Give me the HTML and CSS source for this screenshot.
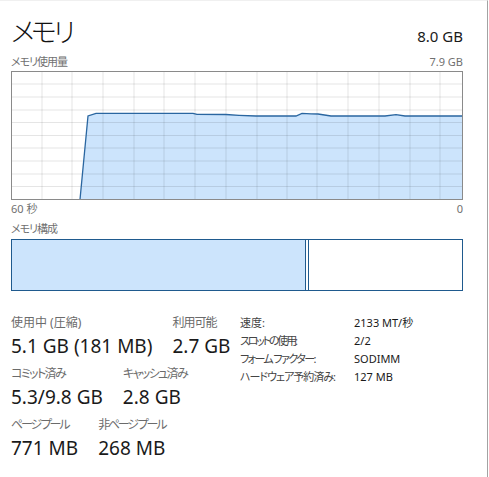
FILE: index.html
```html
<!DOCTYPE html>
<html lang="ja">
<head>
<meta charset="utf-8">
<title>メモリ</title>
<link rel="stylesheet" href="styles.css">
</head>
<body>
<div class="panel">
  <div class="head">
    <h1 class="title">メモリ</h1>
    <div class="total">8.0 GB</div>
  </div>
  <div class="caprow"><span class="t1">メモリ使用量</span><span>7.9 GB</span></div>
  <svg class="graph" width="452" height="129" viewBox="0 0 452 129" xmlns="http://www.w3.org/2000/svg">
    <rect x="0" y="0" width="452" height="129" fill="#ffffff"/>
    <polygon class="area" points="69,128.5 77,45 85,42.3 182,42.3 186,43.3 215,43.5 228,44.3 245,45 285,45 291,42.3 300,42.8 307,43 320,45 374,45 385,43.7 394,45 451.5,45 451.5,128.5"/>
    <g class="grid">
      <line x1="31" y1="0" x2="31" y2="129"/>
      <line x1="61" y1="0" x2="61" y2="129"/>
      <line x1="92" y1="0" x2="92" y2="129"/>
      <line x1="123" y1="0" x2="123" y2="129"/>
      <line x1="153" y1="0" x2="153" y2="129"/>
      <line x1="184" y1="0" x2="184" y2="129"/>
      <line x1="215" y1="0" x2="215" y2="129"/>
      <line x1="246" y1="0" x2="246" y2="129"/>
      <line x1="276" y1="0" x2="276" y2="129"/>
      <line x1="306" y1="0" x2="306" y2="129"/>
      <line x1="337" y1="0" x2="337" y2="129"/>
      <line x1="368" y1="0" x2="368" y2="129"/>
      <line x1="399" y1="0" x2="399" y2="129"/>
      <line x1="429" y1="0" x2="429" y2="129"/>
      <line x1="0" y1="13" x2="452" y2="13"/>
      <line x1="0" y1="26" x2="452" y2="26"/>
      <line x1="0" y1="39" x2="452" y2="39"/>
      <line x1="0" y1="51.5" x2="452" y2="51.5"/>
      <line x1="0" y1="64.5" x2="452" y2="64.5"/>
      <line x1="0" y1="77" x2="452" y2="77"/>
      <line x1="0" y1="90" x2="452" y2="90"/>
      <line x1="0" y1="103" x2="452" y2="103"/>
      <line x1="0" y1="115.5" x2="452" y2="115.5"/>
    </g>
    <polyline class="line" points="69,128.5 77,45 85,42.3 182,42.3 186,43.3 215,43.5 228,44.3 245,45 285,45 291,42.3 300,42.8 307,43 320,45 374,45 385,43.7 394,45 451.5,45"/>
    <rect class="frame" x="0.5" y="0.5" width="451" height="128"/>
  </svg>
  <div class="caprow axis"><span>60 秒</span><span>0</span></div>
  <div class="caption t1">メモリ構成</div>
  <div class="comp">
    <div class="seg used"></div>
    <div class="seg mod"></div>
    <div class="seg rest"></div>
  </div>
  <div class="stats">
    <div class="left">
      <div class="row">
        <div class="stat"><div class="lbl">使用中 (圧縮)</div><div class="val">5.1 GB (181 MB)</div></div>
        <div class="stat"><div class="lbl t1">利用可能</div><div class="val">2.7 GB</div></div>
      </div>
      <div class="row">
        <div class="stat"><div class="lbl t2">コミット済み</div><div class="val">5.3/9.8 GB</div></div>
        <div class="stat"><div class="lbl t2">キャッシュ済み</div><div class="val">2.8 GB</div></div>
      </div>
      <div class="row">
        <div class="stat"><div class="lbl t3">ページ プール</div><div class="val">771 MB</div></div>
        <div class="stat"><div class="lbl t3">非ページ プール</div><div class="val">268 MB</div></div>
      </div>
    </div>
    <div class="right">
      <span class="k">速度:</span><span class="v">2133 MT/秒</span>
      <span class="k t3">スロットの使用:</span><span class="v">2/2</span>
      <span class="k t2">フォーム ファクター:</span><span class="v">SODIMM</span>
      <span class="k t1">ハードウェア予約済み:</span><span class="v">127 MB</span>
    </div>
  </div>
</div>
</body>
</html>
```
FILE: styles.css
```css
html, body {
  margin: 0;
  padding: 0;
  background: #ffffff;
}
body {
  font-family: "Noto Sans", "Noto Sans CJK JP", sans-serif;
  font-feature-settings: "palt";
  color: #1a1a1a;
}
.panel {
  box-sizing: border-box;
  width: 488px;
  height: 477px;
  padding: 12px 24px 0 11px;
  border-right: 1px solid #a3a3a3;
  border-top: 1px solid #f0f0f0;
}
.head {
  display: flex;
  justify-content: space-between;
  align-items: baseline;
}
.title {
  margin: 0;
  font-size: 27px;
  line-height: 37px;
  font-weight: 300;
  letter-spacing: -3.5px;
  color: #111;
}
.total {
  font-size: 15px;
  color: #1a1a1a;
}
.caprow {
  display: flex;
  justify-content: space-between;
  font-size: 11px;
  line-height: 14px;
  color: #707070;
  margin-top: 5px;
}
.t1 {
  letter-spacing: -1px;
}
.t2 {
  letter-spacing: -1.6px;
}
.t3 {
  letter-spacing: -2.2px;
}
.graph {
  display: block;
  margin-top: 2px;
}
.area {
  fill: #cce4fc;
}
.grid line {
  stroke: rgba(0, 0, 0, 0.1);
  stroke-width: 1;
}
.line {
  fill: none;
  stroke: #2a66a0;
  stroke-width: 1.3;
}
.frame {
  fill: none;
  stroke: #8a8a8a;
  stroke-width: 1;
}
.axis {
  margin-top: 2px;
}
.caption {
  font-size: 11px;
  line-height: 14px;
  color: #707070;
  margin-top: 6px;
}
.comp {
  display: flex;
  height: 52px;
  box-sizing: border-box;
  border: 1px solid #1f5a8e;
  margin-top: 3px;
}
.seg.used {
  width: 293px;
  background: #cce4fc;
  border-right: 1px solid #1f5a8e;
}
.seg.mod {
  width: 2px;
  background: #ffffff;
  border-right: 1px solid #1f5a8e;
}
.seg.rest {
  flex: 1;
  background: #ffffff;
}
.stats {
  display: flex;
  margin-top: 24px;
}
.left {
  flex: 0 0 229px;
  display: flex;
  flex-direction: column;
  gap: 8px;
}
.row {
  display: flex;
  gap: 20px;
}
.lbl {
  font-size: 12px;
  line-height: 16px;
  color: #6b6b6b;
  white-space: nowrap;
}
.val {
  font-size: 19px;
  line-height: 24px;
  margin-top: 3px;
  color: #1a1a1a;
  white-space: nowrap;
}
.right {
  display: grid;
  grid-template-columns: 114px auto;
  grid-auto-rows: 18px;
  align-content: start;
  margin-top: -1px;
  font-size: 11px;
  line-height: 18px;
  white-space: nowrap;
}
.right .k {
  color: #444;
}
.right .v {
  color: #1a1a1a;
}
```
